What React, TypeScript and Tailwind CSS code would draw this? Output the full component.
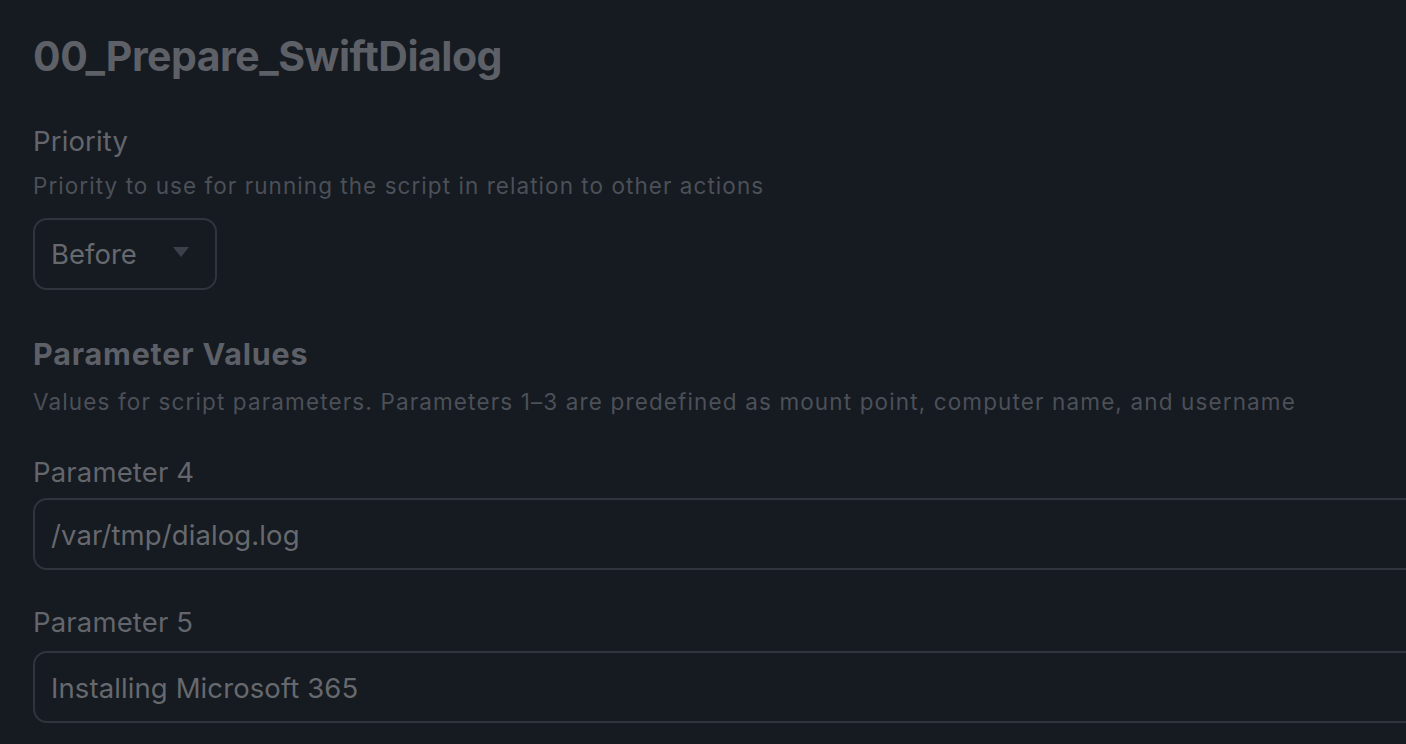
import React from "react";

export default function App() {
  return (
    <div
      className="min-h-[744px] w-full overflow-hidden bg-[#161a21] pl-[33px] pt-[30px]"
      style={{ fontFamily: "Inter, 'Noto Sans', sans-serif" }}
    >
      <h1 className="text-[41px] font-bold leading-[52px] tracking-[-0.5px] text-[#5d6066]">
        00_Prepare_SwiftDialog
      </h1>

      <div className="mt-[42px] text-[27.5px] leading-[34px] tracking-[0.15px] text-[#63666c]">Priority</div>
      <div className="mt-[13px] whitespace-nowrap text-[22.5px] leading-[30px] tracking-[1.05px] text-[#4c5058]">
        Priority to use for running the script in relation to other actions
      </div>
      <div className="mt-[17px] flex h-[72px] w-[184px] items-center justify-between rounded-[14px] border-2 border-[#30343c] pl-[16px] pr-[26px]">
        <span className="pt-[2px] text-[27.5px] text-[#66696e]">Before</span>
        <svg width="16" height="10" viewBox="0 0 16 10" className="-mt-[4px]">
          <polygon points="0,0 16,0 8,10" fill="#3b404b" />
        </svg>
      </div>

      <h2 className="mt-[45px] text-[30.5px] font-bold leading-[38px] tracking-[0.8px] text-[#5d6066]">
        Parameter Values
      </h2>
      <div className="mt-[14px] whitespace-nowrap text-[22.5px] leading-[30px] tracking-[1.13px] text-[#4c5058]">
        Values for script parameters. Parameters 1–3 are predefined as mount point, computer name, and username
      </div>

      <div className="mt-[38px] text-[27.5px] leading-[34px] tracking-[0.15px] text-[#63666c]">Parameter 4</div>
      <div className="mt-[9px] flex h-[72px] w-[1420px] items-center rounded-[14px] border-2 border-[#30343c] pl-[16px]">
        <span className="pt-[3px] text-[27.5px] tracking-[0.1px] text-[#66696e]">/var/tmp/dialog.log</span>
      </div>

      <div className="mt-[35px] text-[27.5px] leading-[34px] tracking-[0.15px] text-[#63666c]">Parameter 5</div>
      <div className="mt-[12px] flex h-[72px] w-[1420px] items-center rounded-[14px] border-2 border-[#30343c] pl-[16px]">
        <span className="pt-[3px] text-[27.5px] tracking-[0.1px] text-[#66696e]">Installing Microsoft 365</span>
      </div>
    </div>
  );
}
